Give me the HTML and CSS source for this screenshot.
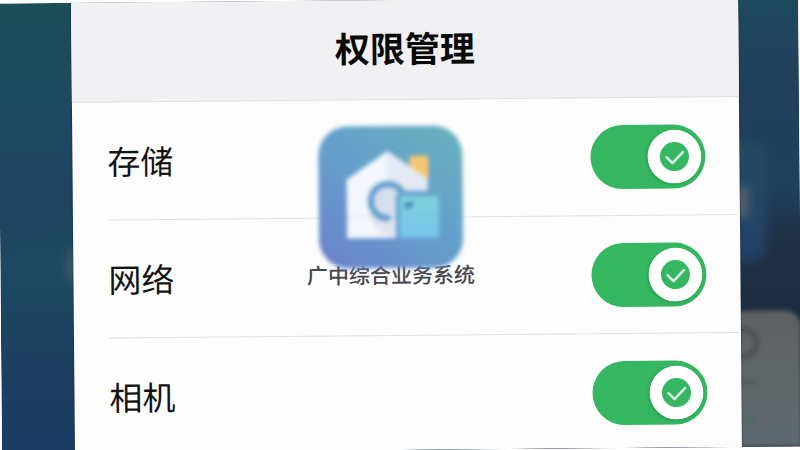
FILE: index.html
```html
<!DOCTYPE html>
<html lang="zh-CN">
<head>
    <meta charset="UTF-8">
    <meta name="viewport" content="width=device-width, initial-scale=1.0">
    <title>权限管理</title>
    <link rel="stylesheet" href="styles.css">
</head>
<body>
    <div class="scene">
        <div class="backdrop">
            <div class="glow"></div>
            <div class="tile"></div>
            <div class="tile-accent"></div>
            <div class="card">
                <div class="card-ring"></div>
                <div class="card-line"></div>
                <div class="card-line green"></div>
            </div>
        </div>

        <main class="panel">
            <header class="panel-header">
                <h1>权限管理</h1>
            </header>
            <ul class="permissions">
                <li>
                    <label for="storage">存储</label>
                    <span class="switch">
                        <input type="checkbox" id="storage" checked>
                        <svg class="knob" viewBox="0 0 54 54"><circle cx="27" cy="27" r="27" fill="#fff"/><circle cx="27" cy="27" r="14.500" fill="#35b761"/><path d="M19 27.500l6 6L35.500 22.500" fill="none" stroke="#dceee0" stroke-width="2.600" stroke-linecap="round" stroke-linejoin="round"/></svg>
                    </span>
                </li>
                <li>
                    <label for="network">网络</label>
                    <span class="switch">
                        <input type="checkbox" id="network" checked>
                        <svg class="knob" viewBox="0 0 54 54"><circle cx="27" cy="27" r="27" fill="#fff"/><circle cx="27" cy="27" r="14.500" fill="#35b761"/><path d="M19 27.500l6 6L35.500 22.500" fill="none" stroke="#dceee0" stroke-width="2.600" stroke-linecap="round" stroke-linejoin="round"/></svg>
                    </span>
                </li>
                <li>
                    <label for="camera">相机</label>
                    <span class="switch">
                        <input type="checkbox" id="camera" checked>
                        <svg class="knob" viewBox="0 0 54 54"><circle cx="27" cy="27" r="27" fill="#fff"/><circle cx="27" cy="27" r="14.500" fill="#35b761"/><path d="M19 27.500l6 6L35.500 22.500" fill="none" stroke="#dceee0" stroke-width="2.600" stroke-linecap="round" stroke-linejoin="round"/></svg>
                    </span>
                </li>
            </ul>

            <div class="app">
                <svg class="app-icon" viewBox="0 0 144 142">
                    <defs>
                        <linearGradient id="bg" x1="0.9" y1="0" x2="0.1" y2="1">
                            <stop offset="0" stop-color="#67afbd"/>
                            <stop offset="0.5" stop-color="#649fcc"/>
                            <stop offset="1" stop-color="#6a83ca"/>
                        </linearGradient>
                        <linearGradient id="box" x1="0" y1="0" x2="0" y2="1">
                            <stop offset="0" stop-color="#80d0de"/>
                            <stop offset="1" stop-color="#77c5ea"/>
                        </linearGradient>
                    </defs>
                    <rect width="144" height="142" rx="29" fill="url(#bg)"/>
                    <path d="M91 30h17q2 0 2 2v22L91 41z" fill="#f7c66f"/>
                    <path d="M69 25L109 53v59H28V53z" fill="#f3f7fb"/>
                    <path d="M69 25L109 53v13H69z" fill="#e3eaf3"/>
                    <path d="M50 87q6 23 29 25V76z" fill="#dfe5ef"/>
                    <circle cx="69" cy="75" r="14" fill="#d5dfec"/>
                    <path d="M69 92A17 17 0 1 1 86 75" fill="none" stroke="#5f9ccf" stroke-width="6" stroke-linecap="round"/>
                    <path d="M109 65H85q-8 0-8 8v39h5V72h27z" fill="#64a2cd"/>
                    <rect x="81" y="70" width="39" height="42" rx="3" fill="url(#box)"/>
                    <ellipse cx="90" cy="79" rx="5" ry="3" fill="#4589b3" transform="rotate(-20 90 79)"/>
                    <path d="M0 91H144" stroke="#5f86b8" stroke-opacity="0.25"/>
                </svg>
                <span class="app-name">广中综合业务系统</span>
            </div>
        </main>
    </div>
</body>
</html>
```
FILE: styles.css
```css
* {
    box-sizing: border-box;
}
body {
    margin: 0;
    background: #fff;
    color: #141414;
    font-family: "Noto Sans CJK SC", sans-serif;
    overflow: hidden;
}
/* the whole screen leans slightly to the left */
.scene {
    position: relative;
    display: flex;
    height: 100vh;
    padding: 0 60px 0 73px;
    overflow: hidden;
    transform: rotate(-0.5deg);
}
.backdrop {
    position: absolute;
    inset: 0;
    background: linear-gradient(#1b4d58, #1d4b60 22%, #1e4363 42%, #1c4960 60%, #1d3d62 85%, #1c3c64);
}
.backdrop::after {
    content: "";
    position: absolute;
    inset: 0 0 0 50%;
    background: linear-gradient(#1d495d, #223f5c 22%, #21405d 42%, #203247 52%, #1d2d41 66%);
}
.glow {
    position: absolute;
    left: 66px;
    top: 245px;
    width: 14px;
    height: 36px;
    border-radius: 50%;
    background: #3c5a63;
    filter: blur(5px);
}
.tile,
.tile-accent,
.card {
    position: absolute;
    z-index: 1;
}
.tile {
    right: 33px;
    top: 145px;
    width: 60px;
    height: 120px;
    border-radius: 20px;
    background: linear-gradient(#234b5f, #22446a 70%, #223f60);
    filter: blur(5px);
}
.tile-accent {
    right: 51px;
    top: 190px;
    width: 14px;
    height: 30px;
    background: #535f69;
    filter: blur(5px);
}
.card {
    right: 0;
    bottom: 0;
    width: 100px;
    height: 136px;
    border-radius: 16px 16px 0 0;
    background: linear-gradient(#5e6063, #606769 60%, #5c6870);
    filter: blur(2px);
}
.card-ring {
    width: 32px;
    height: 32px;
    margin: 16px 0 0 26px;
    border: 5px solid #4c4f53;
    border-radius: 50%;
}
.card-line {
    width: 30px;
    height: 6px;
    margin: 20px 0 0 26px;
    background: #565a5d;
}
.card-line.green {
    margin-top: 32px;
    background: #546862;
}
.panel {
    position: relative;
    z-index: 2;
    flex: 1;
    background: #fdfdfd;
    box-shadow: 0 0 2px #0b2430;
}
.panel-header {
    display: flex;
    align-items: center;
    justify-content: center;
    height: 100px;
    padding-bottom: 5px;
    border-bottom: 1px solid #dfdfe2;
    background: #f1f1f3;
}
h1 {
    margin: 0;
    color: #0a0a0a;
    font-size: 35px;
    font-weight: 700;
    line-height: 48px;
}
.permissions {
    margin: 0;
    padding: 0 2px 0 35px;
    list-style: none;
}
.permissions li {
    display: flex;
    align-items: center;
    justify-content: space-between;
    height: 118px;
    padding-right: 32px;
    border-bottom: 1px solid #dfe0e2;
}
.permissions label {
    padding-bottom: 2px;
    font-size: 33px;
    line-height: 48px;
}
.switch {
    display: grid;
    align-items: center;
}
.switch input,
.switch .knob {
    grid-area: 1 / 1;
}
.switch input {
    appearance: none;
    width: 115px;
    height: 64px;
    margin: 0;
    border-radius: 32px;
    background: #35b761;
}
.knob {
    justify-self: end;
    width: 54px;
    height: 54px;
    margin-right: 4px;
    border-radius: 50%;
    box-shadow: -1px 1px 3px #2a9750;
    pointer-events: none;
}
/* app icon floating over the list */
.app {
    position: absolute;
    top: 126px;
    left: 0;
    right: 32px;
    display: flex;
    flex-direction: column;
    align-items: center;
    pointer-events: none;
}
.app-icon {
    width: 144px;
    height: 142px;
    filter: blur(2px);
}
.app-name {
    margin-top: -10px;
    color: #45484d;
    font-size: 21px;
    font-weight: 500;
    line-height: 32px;
}
```
